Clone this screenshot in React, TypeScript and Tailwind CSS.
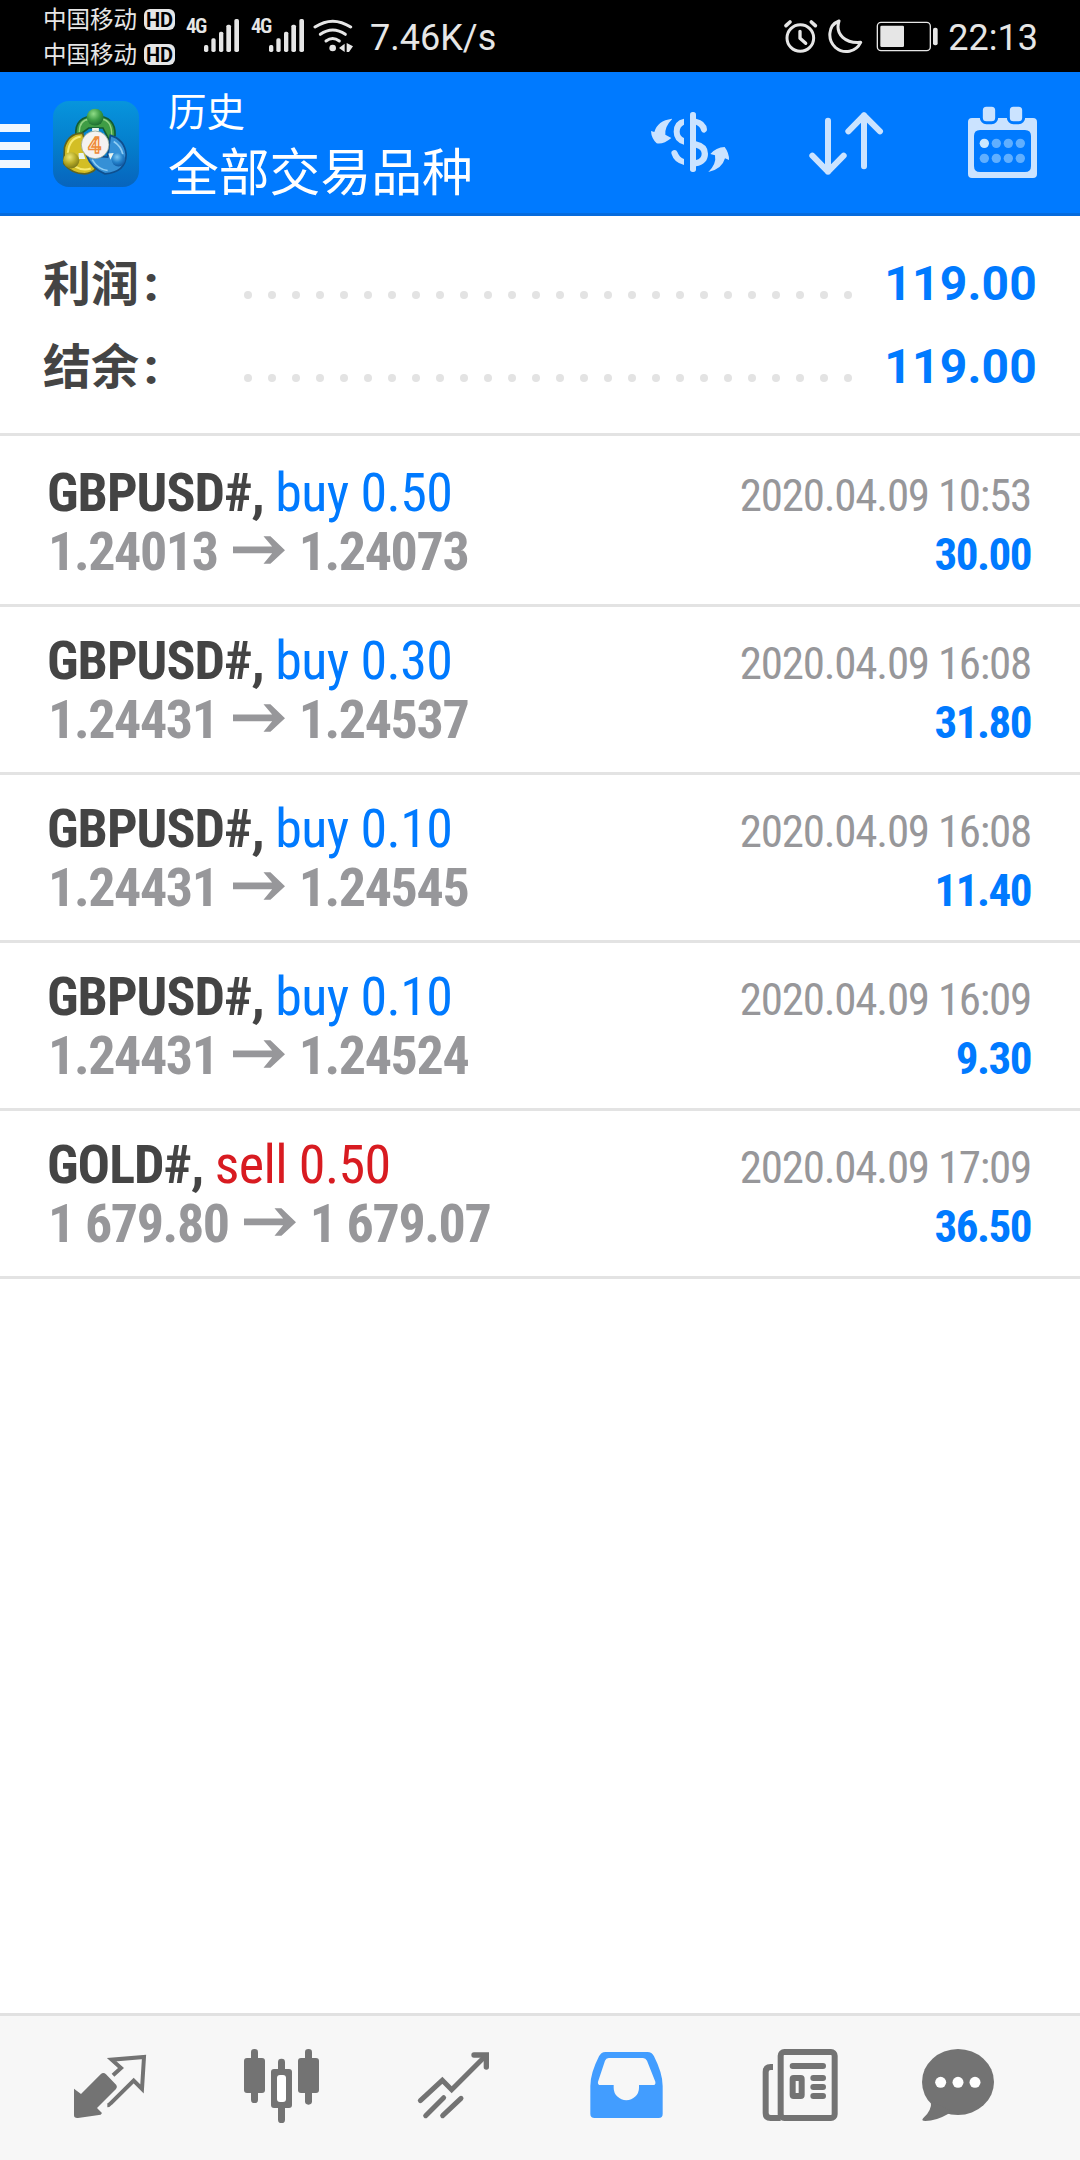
import React from 'react';

type Deal = {
  symbol: string;
  side: 'buy' | 'sell';
  volume: string;
  open: string;
  close: string;
  time: string;
  profit: string;
};

const deals: Deal[] = [
  { symbol: 'GBPUSD#', side: 'buy', volume: '0.50', open: '1.24013', close: '1.24073', time: '2020.04.09 10:53', profit: '30.00' },
  { symbol: 'GBPUSD#', side: 'buy', volume: '0.30', open: '1.24431', close: '1.24537', time: '2020.04.09 16:08', profit: '31.80' },
  { symbol: 'GBPUSD#', side: 'buy', volume: '0.10', open: '1.24431', close: '1.24545', time: '2020.04.09 16:08', profit: '11.40' },
  { symbol: 'GBPUSD#', side: 'buy', volume: '0.10', open: '1.24431', close: '1.24524', time: '2020.04.09 16:09', profit: '9.30' },
  { symbol: 'GOLD#', side: 'sell', volume: '0.50', open: '1 679.80', close: '1 679.07', time: '2020.04.09 17:09', profit: '36.50' },
];

const summary = [
  { label: '利润', value: '119.00' },
  { label: '结余', value: '119.00' },
];

const Carrier = () => (
  <div className="flex h-[35px] items-center">
    <span className="mt-[2px] w-[101px] whitespace-nowrap text-[23.5px] leading-[35px]">中国移动</span>
    <span className="flex h-[21px] w-[31px] items-center justify-center rounded-[6px] bg-[#e6e6e6] text-[20px] leading-none font-bold text-black">
      HD
    </span>
  </div>
);

const Signal = () => (
  <div className="flex">
    <span className="mt-[17px] w-[18px] text-[21px] leading-[19px] font-semibold tracking-[-1.5px] font-stretch-condensed">4G</span>
    <svg viewBox="523 57 105 99" className="mt-[19px] h-[33px] w-[35px]" fill="currentColor">
      <rect x="523" y="135" width="13" height="21" rx="5" />
      <rect x="545" y="115" width="13" height="41" rx="5" />
      <rect x="568" y="95" width="13" height="61" rx="5" />
      <rect x="590" y="74" width="14" height="82" rx="5" />
      <rect x="614" y="57" width="14" height="99" rx="5" />
    </svg>
  </div>
);

const StatusBar = () => (
  <div className="flex h-[72px] bg-black text-[#e6e6e6]">
    <div className="ml-[43px] pt-[2px]">
      <Carrier />
      <Carrier />
    </div>
    <div className="ml-[11px] flex gap-[12px]">
      <Signal />
      <Signal />
    </div>
    <svg viewBox="850 57 120 99" className="mt-[19px] ml-[9px] h-[33px] w-[40px]" fill="none" stroke="currentColor" strokeWidth="9" strokeLinecap="round">
      <path d="M856 81 Q909 46 963 81" />
      <path d="M872 103 Q909 77 947 103" />
      <path d="M889 123 Q909 108 929 123" />
      <circle cx="909" cy="144" r="10" fill="currentColor" stroke="none" />
      <path d="M928 144 L945 131 V156 Z M951 129 L970 139 L958 156 H951 Z" fill="currentColor" stroke="none" />
    </svg>
    <span className="ml-[17px] text-[36px] leading-[77px]">7.46K/s</span>
    <svg viewBox="549 57 240 105" className="mt-[19px] mr-[13px] ml-auto h-[35px] w-[80px]" fill="none" stroke="currentColor" strokeWidth="9" strokeLinecap="round" strokeLinejoin="round">
      <circle cx="601" cy="114" r="40" />
      <path d="M600 94 V115 L617 130" strokeWidth="10" />
      <path d="M558 77 L570 66 M634 66 L646 77" strokeWidth="11" />
      <path d="M717 63 C683 76 682 120 706 142 C732 164 768 156 782 127 C738 131 704 104 717 63 Z" strokeWidth="9" />
    </svg>
    <svg viewBox="831 63 189 93" className="mt-[21px] mr-[9px] h-[31px] w-[63px]" fill="currentColor">
      <rect x="835" y="67" width="159" height="85" rx="11" fill="none" stroke="currentColor" strokeWidth="4" />
      <rect x="844" y="77" width="71" height="64" rx="4" />
      <rect x="1002" y="83" width="14" height="53" rx="6" />
    </svg>
    <span className="mr-[42px] text-[36px] leading-[77px]">22:13</span>
  </div>
);

const AppLogo = () => (
  <svg viewBox="42 50 255 255" className="mt-[29px] ml-[23px] h-[86px] w-[86px]">
    <defs>
      <linearGradient id="tile" x1="0" y1="0" x2="0" y2="1">
        <stop offset="0" stopColor="#0795dd" />
        <stop offset="0.55" stopColor="#047ccb" />
        <stop offset="1" stopColor="#0764bd" />
      </linearGradient>
      <radialGradient id="green" cx="0.4" cy="0.3" r="0.8">
        <stop offset="0" stopColor="#8fdc86" />
        <stop offset="0.5" stopColor="#3c9c45" />
        <stop offset="1" stopColor="#13612a" />
      </radialGradient>
      <radialGradient id="gold" cx="0.4" cy="0.3" r="0.8">
        <stop offset="0" stopColor="#eee670" />
        <stop offset="0.5" stopColor="#b5a926" />
        <stop offset="1" stopColor="#6c6a15" />
      </radialGradient>
      <radialGradient id="azure" cx="0.4" cy="0.3" r="0.8">
        <stop offset="0" stopColor="#7cc6f2" />
        <stop offset="0.5" stopColor="#2583cc" />
        <stop offset="1" stopColor="#0a4d97" />
      </radialGradient>
    </defs>
    <rect x="42" y="50" width="255" height="255" rx="48" fill="url(#tile)" />
    <path d="M110 152 Q105 95 168 94 Q228 95 226 152 L212 172 L190 130 H148 L126 146 Z" fill="#3f9d45" stroke="#145c34" strokeWidth="5" />
    <path d="M120 142 Q120 106 150 104 M216 150 Q216 108 188 104" fill="none" stroke="#93d184" strokeWidth="4" />
    <path d="M130 146 Q88 144 76 188 L74 236 Q98 266 136 266 Q156 264 168 252 L146 208 Z" fill="#d3be25" stroke="#5f6420" strokeWidth="5" />
    <path d="M86 204 Q90 160 124 156 M106 244 Q130 258 154 250" fill="none" stroke="#f7ea70" strokeWidth="6" />
    <path d="M212 152 Q254 164 259 208 Q258 262 196 266 Q156 250 142 212 L204 216 Z" fill="#3590d6" stroke="#0e4f8f" strokeWidth="5" />
    <path d="M158 224 Q176 254 204 256 M222 170 Q244 184 249 208" fill="none" stroke="#8fcdf4" strokeWidth="5" />
    <path d="M118 204 L132 204 L138 222 H118 Z M206 206 L222 204 L212 224 Z M158 130 H178 V140 H158 Z" fill="#e8f4f0" />
    <circle cx="167" cy="98" r="25" fill="url(#green)" />
    <circle cx="96" cy="226" r="24" fill="url(#gold)" />
    <circle cx="236" cy="224" r="20" fill="url(#azure)" />
    <circle cx="167" cy="180" r="41" fill="#f4f2f1" stroke="#8a9c86" strokeWidth="2" />
    <text x="165" y="205" textAnchor="middle" fontSize="68" fontWeight="700" fill="#fff1d8" stroke="#ee8a3a" strokeWidth="4">4</text>
  </svg>
);

const AppBar = () => (
  <div className="flex h-[144px] border-b-[3px] border-[#066bdd] bg-[#007aff] text-white">
    <div className="mt-[52px] flex w-[30px] flex-col gap-[10px]">
      <div className="h-[8px] bg-[#f0f7ff]" />
      <div className="h-[8px] bg-[#f0f7ff]" />
      <div className="h-[8px] bg-[#f0f7ff]" />
    </div>
    <AppLogo />
    <div className="ml-[29px] flex flex-1 flex-col pt-[12px]">
      <span className="text-[38.5px] leading-[58px]">历史</span>
      <span className="text-[50.8px] leading-[64px]">全部交易品种</span>
    </div>
    <svg viewBox="150 330 240 192" className="mt-[38px] h-[64px] w-[80px]" fill="#cbe3ff">
      <rect x="270" y="336" width="18" height="180" rx="8" />
      <path d="M252 356 Q221 362 221 395 Q221 425 252 434 V414 Q239 408 239 395 Q239 380 252 374 Z" />
      <path d="M252 495 Q222 488 215 463 A9 9 0 0 1 232 456 Q238 472 252 477 Z" />
      <path d="M288 356 Q318 362 321 388 A9 9 0 0 1 304 393 Q300 378 288 374 Z" />
      <path d="M288 424 Q324 432 324 461 Q324 492 288 499 V480 Q305 476 305 461 Q305 447 288 443 Z" />
      <path d="M216 356 Q172 362 163 396 L153 393 Q154 415 170 430 Q190 434 214 414 L196 404 Q194 380 216 358 Z" />
      <path d="M325 516 Q350 492 345 466 L331 462 Q348 442 374 441 Q388 460 387 480 L375 475 Q366 508 325 516 Z" />
    </svg>
    <svg viewBox="627 333 225 195" className="mt-[39px] ml-[79px] h-[65px] w-[75px]" fill="none" stroke="#cbe3ff" strokeWidth="18" strokeLinecap="round" strokeLinejoin="round">
      <path d="M684 362 V515 M637 467 L684 515 L731 467" />
      <path d="M792 499 V346 M745 394 L792 346 L840 394" />
    </svg>
    <svg viewBox="1101 318 213 219" className="mt-[34px] mr-[42px] ml-[83px] h-[73px] w-[71px]">
      <path fillRule="evenodd" d="M1116 354 H1299 Q1311 354 1311 366 V522 Q1311 534 1299 534 H1116 Q1104 534 1104 522 V366 Q1104 354 1116 354 Z M1140 390 Q1122 390 1122 408 V498 Q1122 516 1140 516 H1275 Q1293 516 1293 498 V408 Q1293 390 1275 390 Z" fill="#cbe3ff" />
      <rect x="1144" y="316" width="46" height="52" rx="15" fill="#cbe3ff" stroke="#007aff" strokeWidth="9" />
      <rect x="1225" y="316" width="46" height="52" rx="15" fill="#cbe3ff" stroke="#007aff" strokeWidth="9" />
      <circle cx="1153" cy="430" r="14" fill="#cbe8ff" />
      <g fill="#60afff">
        <circle cx="1189" cy="430" r="14" />
        <circle cx="1225" cy="430" r="14" />
        <circle cx="1261" cy="430" r="14" />
        <circle cx="1153" cy="475" r="14" />
        <circle cx="1189" cy="475" r="14" />
        <circle cx="1225" cy="475" r="14" />
        <circle cx="1261" cy="475" r="14" />
      </g>
    </svg>
  </div>
);

const SummaryRow = ({ label, value }: { label: string; value: string }) => (
  <div className="flex h-[83px] items-baseline pr-[43px] pl-[43px] text-[48px] leading-[83px] font-bold">
    <div className="flex w-[201px] text-[#444]">
      <span>{label}</span>
      <span className="ml-[5px] font-black">:</span>
    </div>
    <div className="flex flex-1 -translate-y-[2px] gap-[16px]">
      {Array.from({ length: 26 }).map((_, i) => (
        <span key={i} className="size-[8px] rounded-full bg-[#e3e3e3]" />
      ))}
    </div>
    <span className="-translate-y-px tracking-[0.2px] text-[#007aff] [font-kerning:none]">{value}</span>
  </div>
);

const DealRow: React.FC<{ deal: Deal }> = ({ deal }) => (
  <div className="h-[168px] border-b-[3px] border-[#e3e3e3] pt-[24px] pr-[49px] pl-[48px] font-stretch-condensed">
    <div className="flex h-[59px] items-baseline justify-between leading-[59px]">
      <div className="-ml-px text-[54px] whitespace-pre">
        <span className="font-bold tracking-[-1px] text-[#444]">{deal.symbol}, </span>
        <span className={`tracking-[-0.6px] ${deal.side === 'buy' ? 'text-[#007aff]' : 'text-[#d81b21]'}`}>
          {deal.side} {deal.volume}
        </span>
      </div>
      <span className="text-[45px] tracking-[-1.25px] text-[#97979a]">{deal.time}</span>
    </div>
    <div className="flex h-[59px] items-baseline justify-between leading-[59px] font-bold">
      <div className="flex items-baseline text-[54px] tracking-[-1.4px] text-[#97979a]">
        <span>{deal.open}</span>
        <svg viewBox="676 950 150 83" className="mr-[14px] ml-[15px] h-[28px] w-[52px] -translate-y-[6px]" preserveAspectRatio="none" fill="currentColor">
          <path d="M676 981 H789 L764 951 H784 L826 992 L784 1032 H764 L789 1001 H676 Z" />
        </svg>
        <span>{deal.close}</span>
      </div>
      <span className="text-[45px] tracking-[-1.5px] text-[#007aff]">{deal.profit}</span>
    </div>
  </div>
);

const TabBar = () => (
  <div className="flex h-[147px] border-t-[3px] border-[#e1e1e1] bg-[#f7f7f7] pt-[32px] pl-[70px] text-[#737373]">
    <svg viewBox="30 24 240 228" className="h-[76px] w-[80px]" fill="currentColor">
      <path d="M42 146 L63 162 L122 103 Q130 95 138 103 L169 135 Q173 141 168 147 L111 204 L126 219 L122 224 L54 234 Q42 235 42 226 Z" />
      <path d="M159 106 L183 84 L155 59 L252 51 L246 147 L221 122 L152 190 Q147 196 142 196" fill="none" stroke="currentColor" strokeWidth="12" />
    </svg>
    <svg viewBox="546 24 240 228" className="ml-[92px] h-[76px] w-[80px]" fill="currentColor">
      <rect x="552" y="54" width="63" height="105" rx="9" />
      <rect x="573" y="27" width="21" height="162" rx="10" />
      <rect x="714" y="54" width="63" height="105" rx="9" />
      <rect x="735" y="27" width="21" height="167" rx="10" />
      <rect x="654" y="56" width="21" height="50" rx="10" />
      <rect x="654" y="190" width="21" height="59" rx="10" />
      <rect x="633" y="87" width="63" height="117" rx="9" />
      <rect x="651" y="105" width="27" height="81" rx="9" fill="#fff" />
    </svg>
    <svg viewBox="1062 24 240 228" className="ml-[92px] h-[76px] w-[80px]" fill="none" stroke="currentColor" strokeWidth="15" strokeLinecap="round">
      <path d="M1081 182 L1147 121 L1175 149 L1277 47" />
      <path d="M1242 45 H1279 V81" strokeWidth="16" />
      <path d="M1097 227 L1151 173 M1148 227 L1203 175" />
    </svg>
    <svg viewBox="48 24 240 228" className="ml-[92px] h-[76px] w-[80px]" fill="#429dff">
      <path fillRule="evenodd" d="M106 36 H232 Q246 36 252 49 Q278 100 278 138 V222 Q278 234 266 234 H74 Q61 234 61 222 V138 Q61 100 87 49 Q94 36 106 36 Z M116 54 Q108 54 105 62 L84 125 Q82 135 92 135 H131 V143 A38 38 0 0 0 207 143 V135 H249 Q258 135 256 125 L231 62 Q227 54 219 54 Z" />
    </svg>
    <svg viewBox="564 24 240 228" className="ml-[92px] h-[76px] w-[80px]" fill="none" stroke="currentColor" strokeWidth="18">
      <rect x="632" y="36" width="162" height="198" rx="11" />
      <path d="M609 81 H602 Q587 81 587 96 V219 Q587 234 602 234 H632" />
      <path d="M668 78 H759 M730 114 H759 M730 141 H759 M730 168 H759" strokeLinecap="round" />
      <rect x="668" y="114" width="27" height="54" rx="3" />
    </svg>
    <svg viewBox="1044 24 240 228" className="ml-[80px] h-[76px] w-[80px]" fill="currentColor">
      <ellipse cx="1164" cy="126" rx="108" ry="99" />
      <path d="M1083 184 Q1086 212 1060 234 Q1052 243 1066 243 Q1098 243 1134 222 L1150 215 Z" />
      <g fill="#fff">
        <circle cx="1112" cy="127" r="16.5" />
        <circle cx="1164" cy="127" r="16.5" />
        <circle cx="1215" cy="127" r="16.5" />
      </g>
    </svg>
  </div>
);

export default function App() {
  return (
    <div className="flex h-[2160px] w-[1080px] flex-col overflow-hidden bg-white font-['Roboto','Noto_Sans_CJK_SC',sans-serif]">
      <StatusBar />
      <AppBar />
      <div className="h-[220px] border-b-[3px] border-[#e3e3e3] pt-[27px]">
        {summary.map((row) => (
          <SummaryRow key={row.label} label={row.label} value={row.value} />
        ))}
      </div>
      <div className="flex-1 pt-[3px]">
        {deals.map((deal, i) => (
          <DealRow key={i} deal={deal} />
        ))}
      </div>
      <TabBar />
    </div>
  );
}
